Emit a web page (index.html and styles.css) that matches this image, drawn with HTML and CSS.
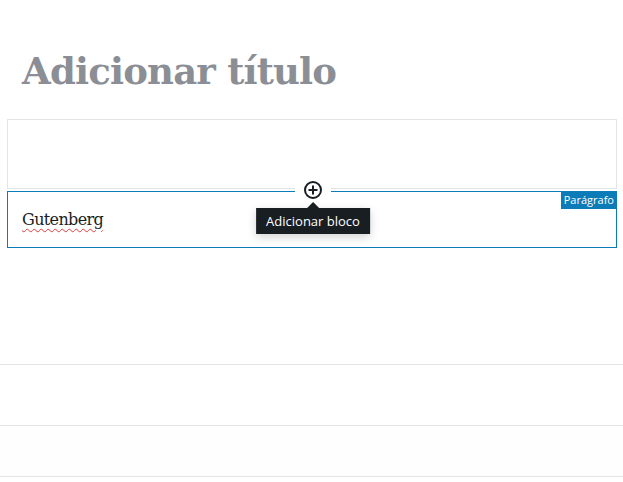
FILE: index.html
```html
<!DOCTYPE html>
<html lang="pt-BR">
<head>
<meta charset="utf-8">
<title>Editor</title>
<link rel="stylesheet" href="styles.css">
</head>
<body>
<div class="editor">
  <h1 class="post-title">Adicionar título</h1>
  <div class="blocks">
    <div class="block block-empty"></div>
    <div class="block block-selected">
      <div class="inserter">
        <span class="inserter-btn">
          <svg width="20" height="20" viewBox="0 0 20 20"><circle cx="10" cy="10" r="8" fill="#fff" stroke="#191e23" stroke-width="2"/><path d="M10 5.5v9M5.5 10h9" stroke="#191e23" stroke-width="2"/></svg>
        </span>
        <span class="tooltip">Adicionar bloco</span>
      </div>
      <span class="block-label">Parágrafo</span>
      <p class="para"><span class="misspelled">Gutenberg</span></p>
    </div>
  </div>
  <div class="meta-area">
    <div class="meta-row meta-row-a"></div>
    <div class="meta-row meta-row-b"></div>
    <div class="meta-row meta-row-c"></div>
  </div>
</div>
</body>
</html>
```
FILE: styles.css
```css
html, body {
  margin: 0;
  padding: 0;
  background: #fff;
}
body {
  width: 623px;
  height: 482px;
  overflow: hidden;
}
.editor {
  display: flex;
  flex-direction: column;
}
.post-title {
  margin: 0;
  height: 119px;
  box-sizing: border-box;
  padding: 47px 0 0 22px;
  font-family: "DejaVu Serif", serif;
  font-weight: bold;
  font-size: 37px;
  line-height: 48px;
  color: #8b8f95;
  letter-spacing: -0.8px;
}
.blocks {
  margin: 0 6px 0 7px;
  display: flex;
  flex-direction: column;
  gap: 2px;
}
.block {
  border: 1px solid #e2e4e7;
  box-sizing: border-box;
}
.block-empty {
  height: 70px;
}
.block-selected {
  position: relative;
  height: 57px;
  border-color: #0c7cb8;
}
.inserter {
  position: absolute;
  left: 287px;
  top: -14px;
  width: 36px;
}
.inserter-btn {
  display: flex;
  justify-content: center;
  align-items: center;
  width: 36px;
  height: 24px;
  background: #fff;
}
.inserter-btn svg {
  display: block;
}
.tooltip {
  position: absolute;
  top: 30px;
  left: 50%;
  transform: translateX(-50%);
  white-space: nowrap;
  background: #191e23;
  color: #fff;
  font-family: "Open Sans", sans-serif;
  font-size: 13px;
  line-height: 26px;
  height: 26px;
  padding: 0 10px;
  box-shadow: 0 3px 10px rgba(0, 0, 0, 0.18);
}
.tooltip::before {
  content: "";
  position: absolute;
  top: -6px;
  left: 50%;
  margin-left: -6px;
  border-left: 6px solid transparent;
  border-right: 6px solid transparent;
  border-bottom: 6px solid #191e23;
}
.block-label {
  position: absolute;
  top: -1px;
  right: -1px;
  background: #0c7cb8;
  color: #fff;
  font-family: "Open Sans", sans-serif;
  font-size: 11px;
  line-height: 18px;
  height: 18px;
  padding: 0 3px 0 3px;
}
.para {
  margin: 0;
  padding: 16px 0 0 14px;
  font-family: "DejaVu Serif", serif;
  font-size: 16px;
  line-height: 24px;
  color: #191e23;
  letter-spacing: -0.65px;
}
.misspelled {
  text-decoration: underline wavy #e83a3a;
  text-decoration-thickness: 1px;
  text-underline-offset: 3px;
}
.meta-area {
  margin-top: 116px;
  display: flex;
  flex-direction: column;
}
.meta-row {
  border-top: 1px solid #e2e4e7;
}
.meta-row-a {
  height: 60px;
}
.meta-row-b {
  height: 50px;
  background: #fefefe;
}
.meta-row-c {
  height: 10px;
}
```
